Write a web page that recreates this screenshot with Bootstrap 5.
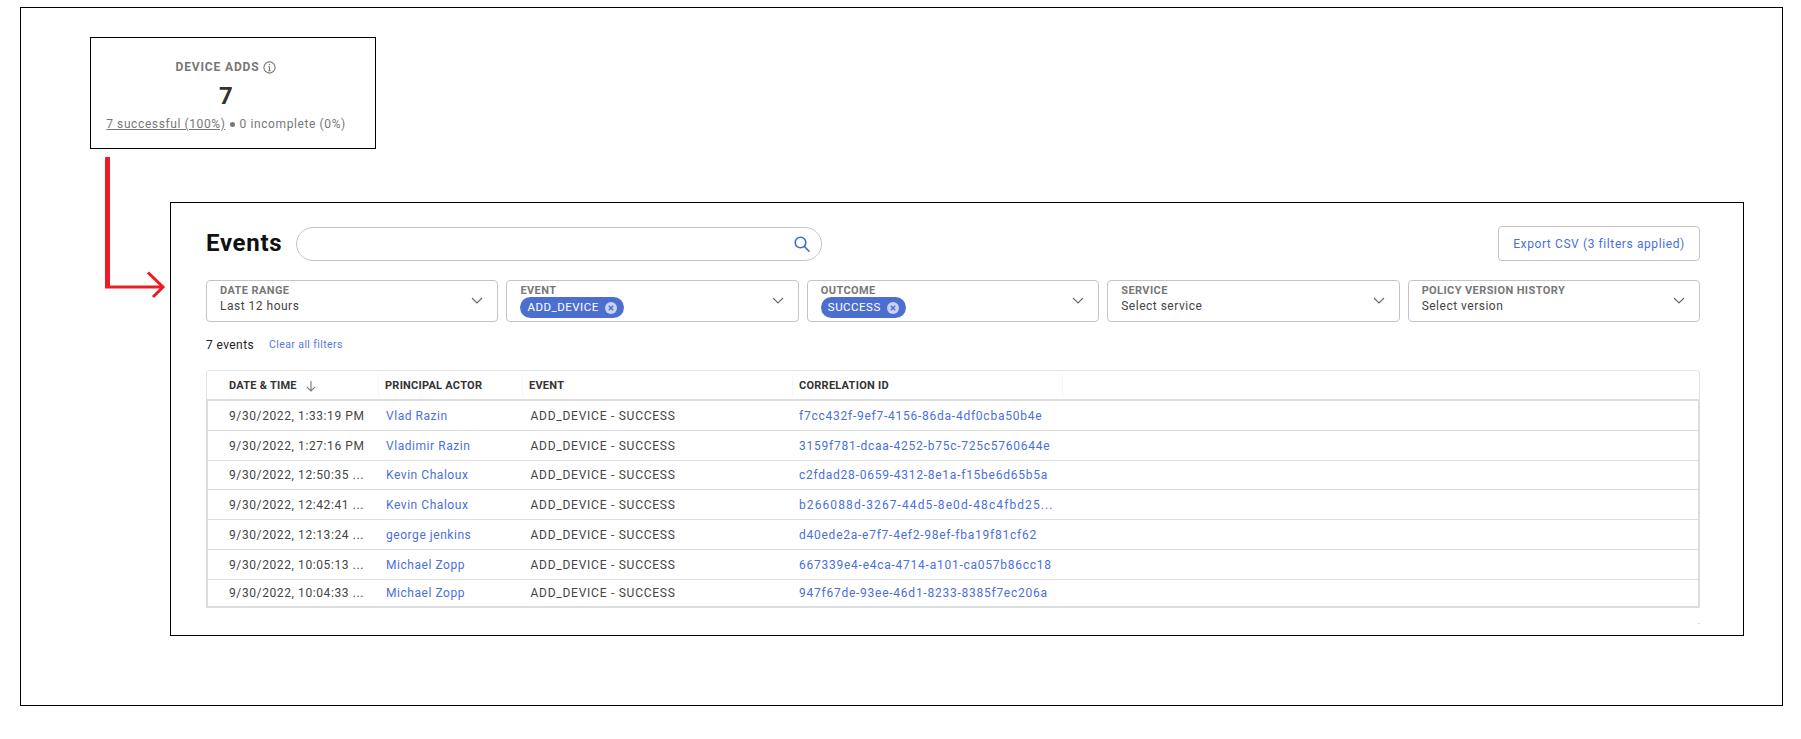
<!DOCTYPE html>
<html lang="en">

<head>
    <meta charset="UTF-8">
    <meta name="viewport" content="width=device-width, initial-scale=1.0">
    <title>Device adds - Events</title>
    <!-- Bootstrap CSS -->
    <link href="https://cdn.jsdelivr.net/npm/bootstrap@5.3.3/dist/css/bootstrap.min.css" rel="stylesheet">
    <!-- Custom CSS -->
    <style>
        body {
            background-color: #fff;
            font-family: Roboto, "Liberation Sans", sans-serif;
            color: #444;
            padding: 7px 0 0 20px;
        }

        .outer-frame {
            width: 1763px;
            height: 699px;
            border: 1px solid #000;
            padding: 29px 0 0 69px;
        }

        .stat-box {
            width: 286px;
            height: 112px;
            border: 1px solid #000;
            padding: 21px 14px 0 0;
            margin-bottom: 8px;
            text-align: center;
        }

        .stat-title {
            font-size: 12px;
            font-weight: 700;
            letter-spacing: .85px;
            color: #777;
            line-height: 16px;
        }

        .stat-number {
            font-size: 24px;
            font-weight: 700;
            color: #333;
            line-height: 28px;
            margin-top: 7px;
        }

        .stat-detail {
            font-size: 12px;
            letter-spacing: .6px;
            color: #777;
            line-height: 16px;
            margin-top: 6px;
        }

        .stat-detail a {
            color: #777;
        }

        .stat-dot {
            display: inline-block;
            width: 5px;
            height: 5px;
            margin: 0 1px 1px;
            background: #777;
        }

        .arrow-col {
            width: 80px;
            flex-shrink: 0;
        }

        .events-frame {
            width: 1574px;
            height: 434px;
            margin-top: 45px;
            border: 1px solid #000;
            padding: 24px 43px 0 35px;
        }

        .events-title {
            font-size: 24px;
            font-weight: 700;
            color: #111;
            letter-spacing: .7px;
            line-height: 34px;
            margin: -2px 14px 0 0;
        }

        .search-box {
            width: 526px;
            height: 34px;
            border: 1px solid #c4c4c4;
            border-radius: 17px;
            padding-right: 10px;
        }

        .export-btn {
            width: 202px;
            height: 35px;
            margin-top: -1px;
            font-size: 12px;
            letter-spacing: .6px;
            color: #4a6fdc;
            border: 1px solid #c4c4c4;
            border-radius: 4px;
            padding: 0;
            background: #fff;
        }

        .filter-row {
            margin-top: 19px;
        }

        .filter-box {
            flex: 1 1 0;
            height: 42px;
            border: 1px solid #c4c4c4;
            border-radius: 4px;
            padding: 3px 14px 0 13px;
        }

        .filter-label {
            font-size: 11px;
            font-weight: 700;
            letter-spacing: .4px;
            color: #777;
            line-height: 13px;
        }

        .filter-value {
            font-size: 12px;
            letter-spacing: .5px;
            color: #444;
            line-height: 17px;
            margin-top: 1px;
        }

        .filter-chip {
            width: fit-content;
            height: 21px;
            padding: 0 7px;
            gap: 6px;
            background: #4c6fcf;
            color: #fff;
            font-size: 11.5px;
            font-weight: 400;
            letter-spacing: .5px;
        }

        .count-row {
            margin-top: 15px;
            height: 16px;
        }

        .count-text {
            font-size: 12px;
            letter-spacing: .4px;
            color: #222;
        }

        .clear-link {
            font-size: 10.5px;
            letter-spacing: .4px;
            color: #5578e0;
            text-decoration: none;
            margin-left: 15px;
        }

        .table-wrap {
            margin-top: 17px;
        }

        .events-table {
            table-layout: fixed;
            width: 100%;
            margin: 0;
            font-size: 12px;
            letter-spacing: .55px;
            border-collapse: separate;
            border-spacing: 0;
        }

        .events-table th {
            height: 31px;
            padding: 2px 0 0 6px;
            vertical-align: middle;
            font-size: 11px;
            font-weight: 700;
            letter-spacing: .25px;
            color: #333;
            border-top: 1px solid #e4e4e4;
            border-bottom: 2px solid #ddd;
        }

        .events-table th:first-child {
            padding-left: 22px;
            border-left: 1px solid #e4e4e4;
            border-top-left-radius: 4px;
        }

        .events-table th:last-child {
            border-right: 1px solid #e4e4e4;
            border-top-right-radius: 4px;
        }

        .head-cell {
            display: block;
            line-height: 22px;
        }

        .events-table td {
            height: 30px;
            padding: 0 0 0 7px;
            vertical-align: middle;
            white-space: nowrap;
            color: #444;
            border-bottom: 1px solid #ddd;
        }

        .events-table td:first-child {
            padding-left: 21px;
            letter-spacing: .6px;
            border-left: 2px solid #ddd;
        }

        .events-table td:nth-child(2) {
            padding-left: 8px;
        }

        .events-table td:last-child {
            border-right: 2px solid #ddd;
        }

        .events-table td:nth-child(3) {
            padding-left: 8.5px;
            letter-spacing: .75px;
        }

        .events-table td:nth-child(4) {
            letter-spacing: .75px;
        }

        .events-table tr:nth-child(3) td {
            height: 29px;
        }

        .events-table tr:nth-child(4) td:nth-child(4) {
            letter-spacing: 1.1px;
        }

        .events-table tr:nth-child(7) td {
            height: 28px;
            border-bottom-width: 2px;
        }

        .events-table a {
            color: #4a6fdc;
            text-decoration: none;
        }

        .col-sep {
            border-left: 1px solid #f6f6f6;
            margin-left: -6px;
            padding-left: 6px;
        }

        .col-sep-end {
            height: 22px;
        }

        .scroll-tick {
            width: 2px;
            height: 1px;
            background: #ddd;
            margin: 15px 0 0 auto;
        }
    </style>
</head>

<body>
    <div class="outer-frame">
        <!-- Stat tile -->
        <div class="stat-box">
            <div class="stat-title d-flex justify-content-center align-items-center gap-1">
                DEVICE ADDS
                <svg width="13" height="13" viewBox="0 0 12 12" fill="none" stroke="#777" stroke-width="1">
                    <circle cx="6" cy="6" r="5.2"></circle>
                    <path d="M6 5.2V9M4.9 9h2.2M5 5.2h1"></path>
                    <path d="M6 2.8v1.1" stroke-width="1.2"></path>
                </svg>
            </div>
            <div class="stat-number">7</div>
            <div class="stat-detail"><a href="#">7 successful (100%)</a> <span class="stat-dot rounded-circle"></span> 0 incomplete (0%)</div>
        </div>

        <div class="d-flex">
            <!-- Red connector -->
            <div class="arrow-col">
                <svg width="80" height="145" viewBox="0 0 80 145" fill="none" stroke="#ed1c24">
                    <path d="M17.5 0V130" stroke-width="5"></path>
                    <path d="M15 130H72" stroke-width="3"></path>
                    <path d="M58 115.500L73 130L63 140" stroke-width="3"></path>
                </svg>
            </div>

            <!-- Events panel -->
            <div class="events-frame">
                <div class="d-flex align-items-center">
                    <h1 class="events-title">Events</h1>
                    <div class="search-box d-flex align-items-center justify-content-end">
                        <svg width="18" height="18" viewBox="0 0 18 18" fill="none" stroke="#3f68d0" stroke-width="1.6">
                            <circle cx="7.500" cy="7.500" r="5.300"></circle>
                            <path d="M11.500 11.500L16 16.200" stroke-linecap="round"></path>
                        </svg>
                    </div>
                    <button type="button" class="btn export-btn ms-auto">Export CSV (3 filters applied)</button>
                </div>

                <div class="filter-row d-flex gap-2">
                    <div class="filter-box d-flex align-items-center justify-content-between">
                        <div class="align-self-start">
                            <div class="filter-label">DATE RANGE</div>
                            <div class="filter-value">Last 12 hours</div>
                        </div>
                        <svg class="mb-1" width="12" height="7" viewBox="0 0 12 7" fill="none" stroke="#666" stroke-width="1.100"><path d="M1 1l5 5 5-5"></path></svg>
                    </div>
                    <div class="filter-box d-flex align-items-center justify-content-between">
                        <div class="align-self-start">
                            <div class="filter-label">EVENT</div>
                            <span class="badge rounded-pill filter-chip d-flex align-items-center">ADD_DEVICE
                                <svg width="12" height="12" viewBox="0 0 12 12"><circle cx="6" cy="6" r="6" fill="#c9d4f0"></circle><path d="M3.800 3.800l4.400 4.400M8.200 3.800l-4.400 4.400" stroke="#4c6fcf" stroke-width="1.400"></path></svg>
                            </span>
                        </div>
                        <svg class="mb-1" width="12" height="7" viewBox="0 0 12 7" fill="none" stroke="#666" stroke-width="1.100"><path d="M1 1l5 5 5-5"></path></svg>
                    </div>
                    <div class="filter-box d-flex align-items-center justify-content-between">
                        <div class="align-self-start">
                            <div class="filter-label">OUTCOME</div>
                            <span class="badge rounded-pill filter-chip d-flex align-items-center">SUCCESS
                                <svg width="12" height="12" viewBox="0 0 12 12"><circle cx="6" cy="6" r="6" fill="#c9d4f0"></circle><path d="M3.800 3.800l4.400 4.400M8.200 3.800l-4.400 4.400" stroke="#4c6fcf" stroke-width="1.400"></path></svg>
                            </span>
                        </div>
                        <svg class="mb-1" width="12" height="7" viewBox="0 0 12 7" fill="none" stroke="#666" stroke-width="1.100"><path d="M1 1l5 5 5-5"></path></svg>
                    </div>
                    <div class="filter-box d-flex align-items-center justify-content-between">
                        <div class="align-self-start">
                            <div class="filter-label">SERVICE</div>
                            <div class="filter-value">Select service</div>
                        </div>
                        <svg class="mb-1" width="12" height="7" viewBox="0 0 12 7" fill="none" stroke="#666" stroke-width="1.100"><path d="M1 1l5 5 5-5"></path></svg>
                    </div>
                    <div class="filter-box d-flex align-items-center justify-content-between">
                        <div class="align-self-start">
                            <div class="filter-label">POLICY VERSION HISTORY</div>
                            <div class="filter-value">Select version</div>
                        </div>
                        <svg class="mb-1" width="12" height="7" viewBox="0 0 12 7" fill="none" stroke="#666" stroke-width="1.100"><path d="M1 1l5 5 5-5"></path></svg>
                    </div>
                </div>

                <div class="count-row d-flex align-items-center">
                    <span class="count-text">7 events</span>
                    <a href="#" class="clear-link">Clear all filters</a>
                </div>

                <div class="table-wrap">
                    <table class="table events-table">
                        <thead>
                            <tr>
                                <th style="width: 172px"><span class="head-cell d-flex align-items-center gap-2">DATE &amp; TIME
                                    <svg width="12" height="12" viewBox="0 0 12 12" fill="none" stroke="#777" stroke-width="1.100"><path d="M6 1v10M1.800 6.800L6 11l4.200-4.200"></path></svg>
                                </span></th>
                                <th style="width: 144px"><span class="head-cell col-sep">PRINCIPAL ACTOR</span></th>
                                <th style="width: 270px"><span class="head-cell col-sep">EVENT</span></th>
                                <th style="width: 270px"><span class="head-cell col-sep">CORRELATION ID</span></th>
                                <th><span class="head-cell col-sep col-sep-end"></span></th>
                            </tr>
                        </thead>
                        <tbody id="eventRows">
                            <tr>
                                <td>9/30/2022, 1:33:19 PM</td>
                                <td><a href="#">Vlad Razin</a></td>
                                <td>ADD_DEVICE - SUCCESS</td>
                                <td><a href="#">f7cc432f-9ef7-4156-86da-4df0cba50b4e</a></td>
                                <td></td>
                            </tr>
                            <tr>
                                <td>9/30/2022, 1:27:16 PM</td>
                                <td><a href="#">Vladimir Razin</a></td>
                                <td>ADD_DEVICE - SUCCESS</td>
                                <td><a href="#">3159f781-dcaa-4252-b75c-725c5760644e</a></td>
                                <td></td>
                            </tr>
                            <tr>
                                <td>9/30/2022, 12:50:35 ...</td>
                                <td><a href="#">Kevin Chaloux</a></td>
                                <td>ADD_DEVICE - SUCCESS</td>
                                <td><a href="#">c2fdad28-0659-4312-8e1a-f15be6d65b5a</a></td>
                                <td></td>
                            </tr>
                            <tr>
                                <td>9/30/2022, 12:42:41 ...</td>
                                <td><a href="#">Kevin Chaloux</a></td>
                                <td>ADD_DEVICE - SUCCESS</td>
                                <td><a href="#">b266088d-3267-44d5-8e0d-48c4fbd25...</a></td>
                                <td></td>
                            </tr>
                            <tr>
                                <td>9/30/2022, 12:13:24 ...</td>
                                <td><a href="#">george jenkins</a></td>
                                <td>ADD_DEVICE - SUCCESS</td>
                                <td><a href="#">d40ede2a-e7f7-4ef2-98ef-fba19f81cf62</a></td>
                                <td></td>
                            </tr>
                            <tr>
                                <td>9/30/2022, 10:05:13 ...</td>
                                <td><a href="#">Michael Zopp</a></td>
                                <td>ADD_DEVICE - SUCCESS</td>
                                <td><a href="#">667339e4-e4ca-4714-a101-ca057b86cc18</a></td>
                                <td></td>
                            </tr>
                            <tr>
                                <td>9/30/2022, 10:04:33 ...</td>
                                <td><a href="#">Michael Zopp</a></td>
                                <td>ADD_DEVICE - SUCCESS</td>
                                <td><a href="#">947f67de-93ee-46d1-8233-8385f7ec206a</a></td>
                                <td></td>
                            </tr>
                        </tbody>
                    </table>
                </div>
                <div class="scroll-tick"></div>
            </div>
        </div>
    </div>

    <!-- Bootstrap JS -->
    <script src="https://cdn.jsdelivr.net/npm/bootstrap@5.3.3/dist/js/bootstrap.bundle.min.js"></script>
</body>

</html>
